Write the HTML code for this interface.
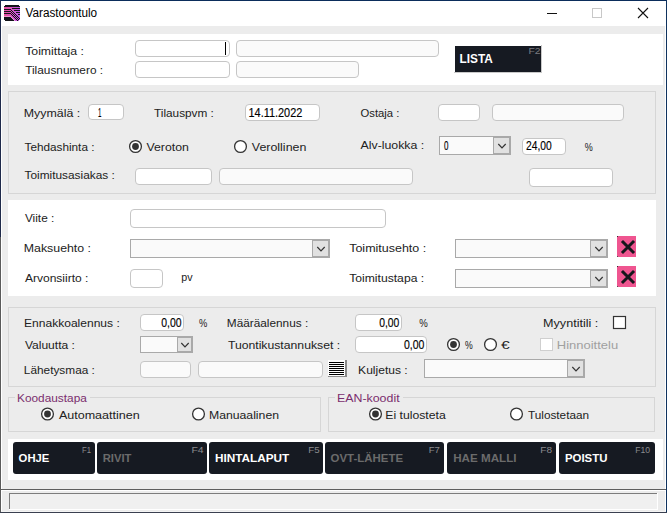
<!DOCTYPE html>
<html><head><meta charset="utf-8"><style>
html,body{margin:0;padding:0;background:#fff;width:667px;height:513px;overflow:hidden}
svg{display:block;font-family:"Liberation Sans",sans-serif}
</style></head><body>
<svg width="667" height="513" viewBox="0 0 667 513" shape-rendering="auto">
<rect x="0" y="0" width="667" height="513" fill="#ffffff"/>
<rect x="2" y="26" width="663" height="486" fill="#ececec"/>
<g shape-rendering="crispEdges"><rect x="5" y="5" width="1" height="1" fill="#141419"/><rect x="6" y="5" width="1" height="1" fill="#141419"/><rect x="7" y="5" width="1" height="1" fill="#141419"/><rect x="8" y="5" width="1" height="1" fill="#141419"/><rect x="9" y="5" width="1" height="1" fill="#141419"/><rect x="10" y="5" width="1" height="1" fill="#141419"/><rect x="11" y="5" width="1" height="1" fill="#141419"/><rect x="12" y="5" width="1" height="1" fill="#141419"/><rect x="13" y="5" width="1" height="1" fill="#141419"/><rect x="14" y="5" width="1" height="1" fill="#141419"/><rect x="15" y="5" width="1" height="1" fill="#141419"/><rect x="16" y="5" width="1" height="1" fill="#141419"/><rect x="17" y="5" width="1" height="1" fill="#141419"/><rect x="18" y="5" width="1" height="1" fill="#141419"/><rect x="4" y="6" width="1" height="1" fill="#141419"/><rect x="5" y="6" width="1" height="1" fill="#141419"/><rect x="6" y="6" width="1" height="1" fill="#141419"/><rect x="7" y="6" width="1" height="1" fill="#141419"/><rect x="8" y="6" width="1" height="1" fill="#141419"/><rect x="9" y="6" width="1" height="1" fill="#141419"/><rect x="10" y="6" width="1" height="1" fill="#141419"/><rect x="11" y="6" width="1" height="1" fill="#141419"/><rect x="12" y="6" width="1" height="1" fill="#141419"/><rect x="13" y="6" width="1" height="1" fill="#141419"/><rect x="14" y="6" width="1" height="1" fill="#141419"/><rect x="15" y="6" width="1" height="1" fill="#141419"/><rect x="16" y="6" width="1" height="1" fill="#141419"/><rect x="17" y="6" width="1" height="1" fill="#141419"/><rect x="18" y="6" width="1" height="1" fill="#141419"/><rect x="19" y="6" width="1" height="1" fill="#141419"/><rect x="4" y="7" width="1" height="1" fill="#e8509e"/><rect x="5" y="7" width="1" height="1" fill="#e550a2"/><rect x="6" y="7" width="1" height="1" fill="#e351a7"/><rect x="7" y="7" width="1" height="1" fill="#e052ac"/><rect x="8" y="7" width="1" height="1" fill="#de52b1"/><rect x="9" y="7" width="1" height="1" fill="#dc53b6"/><rect x="10" y="7" width="1" height="1" fill="#d954bb"/><rect x="11" y="7" width="1" height="1" fill="#d754c0"/><rect x="12" y="7" width="1" height="1" fill="#d455c5"/><rect x="13" y="7" width="1" height="1" fill="#d256ca"/><rect x="14" y="7" width="1" height="1" fill="#d056cf"/><rect x="15" y="7" width="1" height="1" fill="#cd57d4"/><rect x="16" y="7" width="1" height="1" fill="#cb58d9"/><rect x="17" y="7" width="1" height="1" fill="#c858de"/><rect x="18" y="7" width="1" height="1" fill="#c659e3"/><rect x="19" y="7" width="1" height="1" fill="#c45ae8"/><rect x="4" y="8" width="1" height="1" fill="#e8509e"/><rect x="5" y="8" width="1" height="1" fill="#e550a2"/><rect x="6" y="8" width="1" height="1" fill="#e351a7"/><rect x="7" y="8" width="1" height="1" fill="#e052ac"/><rect x="8" y="8" width="1" height="1" fill="#de52b1"/><rect x="9" y="8" width="1" height="1" fill="#dc53b6"/><rect x="10" y="8" width="1" height="1" fill="#d954bb"/><rect x="11" y="8" width="1" height="1" fill="#d754c0"/><rect x="12" y="8" width="1" height="1" fill="#141419"/><rect x="13" y="8" width="1" height="1" fill="#141419"/><rect x="14" y="8" width="1" height="1" fill="#141419"/><rect x="15" y="8" width="1" height="1" fill="#141419"/><rect x="16" y="8" width="1" height="1" fill="#141419"/><rect x="17" y="8" width="1" height="1" fill="#141419"/><rect x="18" y="8" width="1" height="1" fill="#141419"/><rect x="19" y="8" width="1" height="1" fill="#141419"/><rect x="4" y="9" width="1" height="1" fill="#141419"/><rect x="5" y="9" width="1" height="1" fill="#141419"/><rect x="6" y="9" width="1" height="1" fill="#141419"/><rect x="7" y="9" width="1" height="1" fill="#141419"/><rect x="8" y="9" width="1" height="1" fill="#141419"/><rect x="9" y="9" width="1" height="1" fill="#141419"/><rect x="10" y="9" width="1" height="1" fill="#141419"/><rect x="11" y="9" width="1" height="1" fill="#d754c0"/><rect x="12" y="9" width="1" height="1" fill="#d455c5"/><rect x="13" y="9" width="1" height="1" fill="#d256ca"/><rect x="14" y="9" width="1" height="1" fill="#d056cf"/><rect x="15" y="9" width="1" height="1" fill="#cd57d4"/><rect x="16" y="9" width="1" height="1" fill="#cb58d9"/><rect x="17" y="9" width="1" height="1" fill="#c858de"/><rect x="18" y="9" width="1" height="1" fill="#c659e3"/><rect x="19" y="9" width="1" height="1" fill="#c45ae8"/><rect x="4" y="10" width="1" height="1" fill="#e8509e"/><rect x="5" y="10" width="1" height="1" fill="#e550a2"/><rect x="6" y="10" width="1" height="1" fill="#e351a7"/><rect x="7" y="10" width="1" height="1" fill="#e052ac"/><rect x="8" y="10" width="1" height="1" fill="#de52b1"/><rect x="9" y="10" width="1" height="1" fill="#dc53b6"/><rect x="10" y="10" width="1" height="1" fill="#d954bb"/><rect x="11" y="10" width="1" height="1" fill="#141419"/><rect x="12" y="10" width="1" height="1" fill="#d455c5"/><rect x="13" y="10" width="1" height="1" fill="#d256ca"/><rect x="14" y="10" width="1" height="1" fill="#141419"/><rect x="15" y="10" width="1" height="1" fill="#141419"/><rect x="16" y="10" width="1" height="1" fill="#141419"/><rect x="17" y="10" width="1" height="1" fill="#141419"/><rect x="18" y="10" width="1" height="1" fill="#141419"/><rect x="19" y="10" width="1" height="1" fill="#141419"/><rect x="4" y="11" width="1" height="1" fill="#141419"/><rect x="5" y="11" width="1" height="1" fill="#141419"/><rect x="6" y="11" width="1" height="1" fill="#141419"/><rect x="7" y="11" width="1" height="1" fill="#141419"/><rect x="8" y="11" width="1" height="1" fill="#141419"/><rect x="9" y="11" width="1" height="1" fill="#141419"/><rect x="10" y="11" width="1" height="1" fill="#141419"/><rect x="11" y="11" width="1" height="1" fill="#d754c0"/><rect x="12" y="11" width="1" height="1" fill="#141419"/><rect x="13" y="11" width="1" height="1" fill="#d256ca"/><rect x="14" y="11" width="1" height="1" fill="#d056cf"/><rect x="15" y="11" width="1" height="1" fill="#cd57d4"/><rect x="16" y="11" width="1" height="1" fill="#cb58d9"/><rect x="17" y="11" width="1" height="1" fill="#c858de"/><rect x="18" y="11" width="1" height="1" fill="#c659e3"/><rect x="19" y="11" width="1" height="1" fill="#c45ae8"/><rect x="4" y="12" width="1" height="1" fill="#e8509e"/><rect x="5" y="12" width="1" height="1" fill="#e550a2"/><rect x="6" y="12" width="1" height="1" fill="#e351a7"/><rect x="7" y="12" width="1" height="1" fill="#e052ac"/><rect x="8" y="12" width="1" height="1" fill="#de52b1"/><rect x="9" y="12" width="1" height="1" fill="#dc53b6"/><rect x="10" y="12" width="1" height="1" fill="#d954bb"/><rect x="11" y="12" width="1" height="1" fill="#141419"/><rect x="12" y="12" width="1" height="1" fill="#d455c5"/><rect x="13" y="12" width="1" height="1" fill="#141419"/><rect x="14" y="12" width="1" height="1" fill="#d056cf"/><rect x="15" y="12" width="1" height="1" fill="#cd57d4"/><rect x="16" y="12" width="1" height="1" fill="#141419"/><rect x="17" y="12" width="1" height="1" fill="#141419"/><rect x="18" y="12" width="1" height="1" fill="#141419"/><rect x="19" y="12" width="1" height="1" fill="#141419"/><rect x="4" y="13" width="1" height="1" fill="#141419"/><rect x="5" y="13" width="1" height="1" fill="#141419"/><rect x="6" y="13" width="1" height="1" fill="#141419"/><rect x="7" y="13" width="1" height="1" fill="#141419"/><rect x="8" y="13" width="1" height="1" fill="#141419"/><rect x="9" y="13" width="1" height="1" fill="#141419"/><rect x="10" y="13" width="1" height="1" fill="#141419"/><rect x="11" y="13" width="1" height="1" fill="#d754c0"/><rect x="12" y="13" width="1" height="1" fill="#141419"/><rect x="13" y="13" width="1" height="1" fill="#d256ca"/><rect x="14" y="13" width="1" height="1" fill="#141419"/><rect x="15" y="13" width="1" height="1" fill="#cd57d4"/><rect x="16" y="13" width="1" height="1" fill="#cb58d9"/><rect x="17" y="13" width="1" height="1" fill="#c858de"/><rect x="18" y="13" width="1" height="1" fill="#c659e3"/><rect x="19" y="13" width="1" height="1" fill="#c45ae8"/><rect x="4" y="14" width="1" height="1" fill="#e8509e"/><rect x="5" y="14" width="1" height="1" fill="#e550a2"/><rect x="6" y="14" width="1" height="1" fill="#e351a7"/><rect x="7" y="14" width="1" height="1" fill="#e052ac"/><rect x="8" y="14" width="1" height="1" fill="#de52b1"/><rect x="9" y="14" width="1" height="1" fill="#dc53b6"/><rect x="10" y="14" width="1" height="1" fill="#d954bb"/><rect x="11" y="14" width="1" height="1" fill="#141419"/><rect x="12" y="14" width="1" height="1" fill="#d455c5"/><rect x="13" y="14" width="1" height="1" fill="#141419"/><rect x="14" y="14" width="1" height="1" fill="#d056cf"/><rect x="15" y="14" width="1" height="1" fill="#141419"/><rect x="16" y="14" width="1" height="1" fill="#cb58d9"/><rect x="17" y="14" width="1" height="1" fill="#c858de"/><rect x="18" y="14" width="1" height="1" fill="#141419"/><rect x="19" y="14" width="1" height="1" fill="#141419"/><rect x="4" y="15" width="1" height="1" fill="#e8509e"/><rect x="5" y="15" width="1" height="1" fill="#e550a2"/><rect x="6" y="15" width="1" height="1" fill="#e351a7"/><rect x="7" y="15" width="1" height="1" fill="#e052ac"/><rect x="8" y="15" width="1" height="1" fill="#de52b1"/><rect x="9" y="15" width="1" height="1" fill="#dc53b6"/><rect x="10" y="15" width="1" height="1" fill="#d954bb"/><rect x="11" y="15" width="1" height="1" fill="#d754c0"/><rect x="12" y="15" width="1" height="1" fill="#141419"/><rect x="13" y="15" width="1" height="1" fill="#d256ca"/><rect x="14" y="15" width="1" height="1" fill="#141419"/><rect x="15" y="15" width="1" height="1" fill="#cd57d4"/><rect x="16" y="15" width="1" height="1" fill="#141419"/><rect x="17" y="15" width="1" height="1" fill="#c858de"/><rect x="18" y="15" width="1" height="1" fill="#c659e3"/><rect x="19" y="15" width="1" height="1" fill="#c45ae8"/><rect x="4" y="16" width="1" height="1" fill="#e8509e" opacity="0.6"/><rect x="5" y="16" width="1" height="1" fill="#e550a2" opacity="0.6"/><rect x="6" y="16" width="1" height="1" fill="#e351a7" opacity="0.6"/><rect x="7" y="16" width="1" height="1" fill="#e052ac" opacity="0.6"/><rect x="8" y="16" width="1" height="1" fill="#de52b1" opacity="0.6"/><rect x="9" y="16" width="1" height="1" fill="#dc53b6" opacity="0.6"/><rect x="10" y="16" width="1" height="1" fill="#d954bb" opacity="0.6"/><rect x="11" y="16" width="1" height="1" fill="#d754c0"/><rect x="12" y="16" width="1" height="1" fill="#d455c5"/><rect x="13" y="16" width="1" height="1" fill="#141419"/><rect x="14" y="16" width="1" height="1" fill="#d056cf"/><rect x="15" y="16" width="1" height="1" fill="#141419"/><rect x="16" y="16" width="1" height="1" fill="#cb58d9"/><rect x="17" y="16" width="1" height="1" fill="#141419"/><rect x="18" y="16" width="1" height="1" fill="#c659e3"/><rect x="19" y="16" width="1" height="1" fill="#c45ae8"/><rect x="4" y="17" width="1" height="1" fill="#141419"/><rect x="5" y="17" width="1" height="1" fill="#141419"/><rect x="6" y="17" width="1" height="1" fill="#141419"/><rect x="7" y="17" width="1" height="1" fill="#141419"/><rect x="8" y="17" width="1" height="1" fill="#141419"/><rect x="9" y="17" width="1" height="1" fill="#141419"/><rect x="10" y="17" width="1" height="1" fill="#141419"/><rect x="11" y="17" width="1" height="1" fill="#d754c0" opacity="0.6"/><rect x="12" y="17" width="1" height="1" fill="#d455c5"/><rect x="13" y="17" width="1" height="1" fill="#d256ca"/><rect x="14" y="17" width="1" height="1" fill="#141419"/><rect x="15" y="17" width="1" height="1" fill="#cd57d4"/><rect x="16" y="17" width="1" height="1" fill="#141419"/><rect x="17" y="17" width="1" height="1" fill="#c858de"/><rect x="18" y="17" width="1" height="1" fill="#141419"/><rect x="19" y="17" width="1" height="1" fill="#c45ae8"/><rect x="4" y="18" width="1" height="1" fill="#141419"/><rect x="5" y="18" width="1" height="1" fill="#141419"/><rect x="6" y="18" width="1" height="1" fill="#141419"/><rect x="7" y="18" width="1" height="1" fill="#141419"/><rect x="8" y="18" width="1" height="1" fill="#141419"/><rect x="9" y="18" width="1" height="1" fill="#141419"/><rect x="10" y="18" width="1" height="1" fill="#141419"/><rect x="11" y="18" width="1" height="1" fill="#141419"/><rect x="12" y="18" width="1" height="1" fill="#d455c5" opacity="0.6"/><rect x="13" y="18" width="1" height="1" fill="#d256ca"/><rect x="14" y="18" width="1" height="1" fill="#d056cf"/><rect x="15" y="18" width="1" height="1" fill="#141419"/><rect x="16" y="18" width="1" height="1" fill="#cb58d9"/><rect x="17" y="18" width="1" height="1" fill="#141419"/><rect x="18" y="18" width="1" height="1" fill="#c659e3"/><rect x="19" y="18" width="1" height="1" fill="#141419"/><rect x="4" y="19" width="1" height="1" fill="#141419"/><rect x="5" y="19" width="1" height="1" fill="#141419"/><rect x="6" y="19" width="1" height="1" fill="#141419"/><rect x="7" y="19" width="1" height="1" fill="#141419"/><rect x="8" y="19" width="1" height="1" fill="#141419"/><rect x="9" y="19" width="1" height="1" fill="#141419"/><rect x="10" y="19" width="1" height="1" fill="#141419"/><rect x="11" y="19" width="1" height="1" fill="#141419"/><rect x="12" y="19" width="1" height="1" fill="#141419"/><rect x="13" y="19" width="1" height="1" fill="#d256ca" opacity="0.6"/><rect x="14" y="19" width="1" height="1" fill="#d056cf"/><rect x="15" y="19" width="1" height="1" fill="#cd57d4"/><rect x="16" y="19" width="1" height="1" fill="#141419"/><rect x="17" y="19" width="1" height="1" fill="#c858de"/><rect x="18" y="19" width="1" height="1" fill="#141419"/><rect x="19" y="19" width="1" height="1" fill="#c45ae8"/><rect x="5" y="20" width="1" height="1" fill="#141419"/><rect x="6" y="20" width="1" height="1" fill="#141419"/><rect x="7" y="20" width="1" height="1" fill="#141419"/><rect x="8" y="20" width="1" height="1" fill="#141419"/><rect x="9" y="20" width="1" height="1" fill="#141419"/><rect x="10" y="20" width="1" height="1" fill="#141419"/><rect x="11" y="20" width="1" height="1" fill="#141419"/><rect x="12" y="20" width="1" height="1" fill="#141419"/><rect x="13" y="20" width="1" height="1" fill="#141419"/><rect x="14" y="20" width="1" height="1" fill="#d056cf" opacity="0.6"/><rect x="15" y="20" width="1" height="1" fill="#cd57d4"/><rect x="16" y="20" width="1" height="1" fill="#cb58d9"/><rect x="17" y="20" width="1" height="1" fill="#141419"/><rect x="18" y="20" width="1" height="1" fill="#c659e3"/></g>
<path d="M547 13.5 H557" stroke="#111" stroke-width="1"/>
<rect x="592.5" y="8.5" width="9" height="9" fill="none" stroke="#c8c8c8" stroke-width="1"/>
<path d="M638 8 L648 18 M648 8 L638 18" stroke="#111" stroke-width="1.1"/>
<rect x="8" y="34" width="655" height="51" fill="#ffffff"/>
<rect x="135.5" y="40.5" width="94" height="16" rx="3.5" fill="#fff" stroke="#c6c6c6" stroke-width="1"/>
<rect x="236.5" y="40.5" width="202" height="16" rx="3.5" fill="#fafafa" stroke="#c6c6c6" stroke-width="1"/>
<rect x="135.5" y="61.5" width="94" height="16" rx="3.5" fill="#fff" stroke="#c6c6c6" stroke-width="1"/>
<rect x="236.5" y="61.5" width="122" height="16" rx="3.5" fill="#fafafa" stroke="#c6c6c6" stroke-width="1"/>
<rect x="225" y="42" width="1" height="13" fill="#000"/>
<rect x="541" y="45" width="1" height="28" fill="#c9c9c9"/>
<rect x="454" y="72" width="88" height="1" fill="#c9c9c9"/>
<rect x="455" y="46" width="86" height="26" fill="#161a22"/>
<rect x="8.5" y="91.5" width="647" height="102" rx="0" fill="#ececec" stroke="#d6d6d6" stroke-width="1"/>
<rect x="88.5" y="104.5" width="35" height="15" rx="3.5" fill="#fff" stroke="#c6c6c6" stroke-width="1"/>
<rect x="245.5" y="104.5" width="74" height="16" rx="3.5" fill="#fff" stroke="#c6c6c6" stroke-width="1"/>
<rect x="438.5" y="104.5" width="41" height="16" rx="3.5" fill="#fff" stroke="#c6c6c6" stroke-width="1"/>
<rect x="492.5" y="104.5" width="131" height="16" rx="3.5" fill="#fafafa" stroke="#c6c6c6" stroke-width="1"/>
<circle cx="135.5" cy="146.5" r="5.9" fill="#fff" stroke="#333" stroke-width="1.3"/>
<circle cx="135.5" cy="146.5" r="3.4" fill="#333"/>
<circle cx="240.5" cy="146.5" r="5.9" fill="#fff" stroke="#333" stroke-width="1.3"/>
<rect x="439" y="136" width="72" height="19" fill="#a9a9a9"/>
<rect x="440" y="137" width="70" height="17" fill="#fafafa"/>
<rect x="493" y="136" width="18" height="19" fill="#a9a9a9"/>
<rect x="494" y="138" width="15" height="15" fill="#e1e1e1"/>
<path d="M498.3 144.0 L502.0 147.8 L505.7 144.0" fill="none" stroke="#333" stroke-width="1.2"/>
<rect x="522.5" y="138.5" width="43" height="16" rx="3.5" fill="#fff" stroke="#c6c6c6" stroke-width="1"/>
<rect x="135.5" y="168.5" width="76" height="16" rx="3.5" fill="#fff" stroke="#c6c6c6" stroke-width="1"/>
<rect x="219.5" y="168.5" width="193" height="16" rx="3.5" fill="#fafafa" stroke="#c6c6c6" stroke-width="1"/>
<rect x="529.5" y="168.5" width="83" height="18" rx="3.5" fill="#fff" stroke="#c6c6c6" stroke-width="1"/>
<rect x="8" y="200" width="648" height="96" fill="#ffffff"/>
<rect x="130.5" y="209.5" width="255" height="18" rx="3.5" fill="#fff" stroke="#c6c6c6" stroke-width="1"/>
<rect x="130" y="239" width="200" height="19" fill="#a9a9a9"/>
<rect x="131" y="240" width="198" height="17" fill="#fafafa"/>
<rect x="312" y="239" width="18" height="19" fill="#a9a9a9"/>
<rect x="313" y="241" width="15" height="15" fill="#e1e1e1"/>
<path d="M317.3 247.0 L321.0 250.8 L324.7 247.0" fill="none" stroke="#333" stroke-width="1.2"/>
<rect x="130.5" y="269.5" width="32" height="18" rx="3.5" fill="#fff" stroke="#c6c6c6" stroke-width="1"/>
<rect x="455" y="239" width="153" height="19" fill="#a9a9a9"/>
<rect x="456" y="240" width="151" height="17" fill="#fafafa"/>
<rect x="590" y="239" width="18" height="19" fill="#a9a9a9"/>
<rect x="591" y="241" width="15" height="15" fill="#e1e1e1"/>
<path d="M595.3 247.0 L599.0 250.8 L602.7 247.0" fill="none" stroke="#333" stroke-width="1.2"/>
<rect x="455" y="269" width="153" height="19" fill="#a9a9a9"/>
<rect x="456" y="270" width="151" height="17" fill="#fafafa"/>
<rect x="590" y="269" width="18" height="19" fill="#a9a9a9"/>
<rect x="591" y="271" width="15" height="15" fill="#e1e1e1"/>
<path d="M595.3 277.0 L599.0 280.8 L602.7 277.0" fill="none" stroke="#333" stroke-width="1.2"/>
<rect x="617" y="236" width="19" height="21" fill="#ef5590"/>
<path d="M623 242 L633 252 M633 242 L623 252" stroke="#16161c" stroke-width="3" stroke-linecap="square"/>
<rect x="617" y="236" width="1" height="1" fill="#333"/>
<rect x="617" y="256" width="1" height="1" fill="#555"/>
<rect x="617" y="266" width="19" height="21" fill="#ef5590"/>
<path d="M623 272 L633 282 M633 272 L623 282" stroke="#16161c" stroke-width="3" stroke-linecap="square"/>
<rect x="617" y="266" width="1" height="1" fill="#333"/>
<rect x="617" y="286" width="1" height="1" fill="#555"/>
<rect x="8.5" y="307.5" width="647" height="79" rx="0" fill="#ececec" stroke="#d6d6d6" stroke-width="1"/>
<rect x="140.5" y="314.5" width="43" height="16" rx="3.5" fill="#fff" stroke="#c6c6c6" stroke-width="1"/>
<rect x="140" y="336" width="53" height="17" fill="#a9a9a9"/>
<rect x="141" y="337" width="51" height="15" fill="#fafafa"/>
<rect x="177" y="336" width="16" height="17" fill="#a9a9a9"/>
<rect x="178" y="338" width="13" height="13" fill="#e1e1e1"/>
<path d="M181.3 343.0 L185.0 346.8 L188.7 343.0" fill="none" stroke="#333" stroke-width="1.2"/>
<rect x="140.5" y="361.5" width="50" height="16" rx="3.5" fill="#fafafa" stroke="#c6c6c6" stroke-width="1"/>
<rect x="198.5" y="361.5" width="124" height="16" rx="3.5" fill="#fafafa" stroke="#c6c6c6" stroke-width="1"/>
<rect x="345" y="360" width="2" height="17" fill="#8a8a8a"/>
<rect x="328" y="376" width="19" height="1" fill="#8a8a8a"/>
<rect x="328" y="360" width="17" height="16" fill="#ffffff"/>
<rect x="329" y="362" width="15" height="1" fill="#000"/>
<rect x="329" y="364" width="15" height="1" fill="#000"/>
<rect x="329" y="366" width="15" height="1" fill="#000"/>
<rect x="329" y="368" width="15" height="1" fill="#000"/>
<rect x="329" y="370" width="15" height="1" fill="#000"/>
<rect x="329" y="372" width="15" height="1" fill="#000"/>
<rect x="329" y="374" width="15" height="1" fill="#000"/>
<rect x="424" y="359" width="161" height="19" fill="#a9a9a9"/>
<rect x="425" y="360" width="159" height="17" fill="#fafafa"/>
<rect x="567" y="359" width="18" height="19" fill="#a9a9a9"/>
<rect x="568" y="361" width="15" height="15" fill="#e1e1e1"/>
<path d="M572.3 367.0 L576.0 370.8 L579.7 367.0" fill="none" stroke="#333" stroke-width="1.2"/>
<rect x="355.5" y="314.5" width="46" height="16" rx="3.5" fill="#fff" stroke="#c6c6c6" stroke-width="1"/>
<rect x="355.5" y="336.5" width="71" height="16" rx="3.5" fill="#fff" stroke="#c6c6c6" stroke-width="1"/>
<circle cx="453.5" cy="344.5" r="5.9" fill="#fff" stroke="#333" stroke-width="1.3"/>
<circle cx="453.5" cy="344.5" r="3.4" fill="#333"/>
<circle cx="490.5" cy="344.5" r="5.9" fill="#fff" stroke="#333" stroke-width="1.3"/>
<rect x="613.5" y="316.5" width="12" height="12" fill="#fff" stroke="#333" stroke-width="1.2"/>
<rect x="540.5" y="338.5" width="12" height="12" rx="0" fill="#fff" stroke="#cfcfcf" stroke-width="1"/>
<rect x="8" y="397" width="1" height="35" fill="#d6d6d6"/>
<rect x="8" y="431" width="313" height="1" fill="#d6d6d6"/>
<rect x="320" y="397" width="1" height="35" fill="#d6d6d6"/>
<rect x="8" y="397" width="7" height="1" fill="#d6d6d6"/>
<rect x="90" y="397" width="231" height="1" fill="#d6d6d6"/>
<rect x="328" y="397" width="1" height="35" fill="#d6d6d6"/>
<rect x="328" y="431" width="327" height="1" fill="#d6d6d6"/>
<rect x="654" y="397" width="1" height="35" fill="#d6d6d6"/>
<rect x="328" y="397" width="7" height="1" fill="#d6d6d6"/>
<rect x="403" y="397" width="252" height="1" fill="#d6d6d6"/>
<circle cx="47.5" cy="414" r="5.9" fill="#fff" stroke="#333" stroke-width="1.3"/>
<circle cx="47.5" cy="414" r="3.4" fill="#333"/>
<circle cx="198.5" cy="414" r="5.9" fill="#fff" stroke="#333" stroke-width="1.3"/>
<circle cx="375.5" cy="414" r="5.9" fill="#fff" stroke="#333" stroke-width="1.3"/>
<circle cx="375.5" cy="414" r="3.4" fill="#333"/>
<circle cx="516.5" cy="414" r="5.9" fill="#fff" stroke="#333" stroke-width="1.3"/>
<rect x="8" y="439" width="655" height="41" fill="#ffffff"/>
<rect x="13" y="442" width="82" height="32" rx="3" fill="#161a22"/>
<rect x="97" y="442" width="110" height="32" rx="3" fill="#161a22"/>
<rect x="209" y="442" width="114" height="32" rx="3" fill="#161a22"/>
<rect x="325" y="442" width="119" height="32" rx="3" fill="#161a22"/>
<rect x="447" y="442" width="109" height="32" rx="3" fill="#161a22"/>
<rect x="559" y="442" width="96" height="32" rx="3" fill="#161a22"/>
<rect x="0" y="489" width="667" height="1" fill="#5e5e5e"/>
<rect x="0" y="490" width="667" height="1" fill="#ffffff"/>
<rect x="2" y="491" width="663" height="20" fill="#ececec"/>
<rect x="9" y="493" width="649" height="17" fill="#ffffff"/>
<rect x="9" y="493" width="648" height="16" fill="#7c7c7c"/>
<rect x="10" y="494" width="647" height="15" fill="#f0f0f0"/>
<rect x="0" y="511" width="667" height="1" fill="#f4f4f4"/>
<rect x="0" y="0" width="667" height="1" fill="#0b2d5b"/>
<rect x="666" y="0" width="1" height="513" fill="#0f335f"/>
<rect x="0" y="0" width="1" height="237" fill="#1f2a4a"/>
<rect x="0" y="237" width="1" height="276" fill="#5a5a5a"/>
<rect x="0" y="512" width="667" height="1" fill="#3a4050"/>
<text x="25.50" y="17" font-size="12" textLength="71.67" lengthAdjust="spacingAndGlyphs" fill="#000">Varastoontulo</text>
<text x="25.20" y="55" font-size="11" textLength="58.64" lengthAdjust="spacingAndGlyphs" fill="#222">Toimittaja :</text>
<text x="25.20" y="74" font-size="11" textLength="77.87" lengthAdjust="spacingAndGlyphs" fill="#222">Tilausnumero :</text>
<text x="459.50" y="63" font-size="12" font-weight="bold" textLength="33.28" lengthAdjust="spacingAndGlyphs" fill="#fff">LISTA</text>
<text x="528.50" y="54" font-size="9" textLength="12.09" lengthAdjust="spacingAndGlyphs" fill="#7a7a80">F2</text>
<text x="23.77" y="117" font-size="11" textLength="56.50" lengthAdjust="spacingAndGlyphs" fill="#222">Myymälä :</text>
<text transform="translate(97.88,117) scale(0.517,1)" font-size="12" stroke="#000" stroke-width="0.15" fill="#000">1</text>
<text x="154.00" y="117" font-size="11" textLength="59.89" lengthAdjust="spacingAndGlyphs" fill="#222">Tilauspvm :</text>
<text x="248.49" y="117" font-size="12" textLength="53.87" lengthAdjust="spacingAndGlyphs" stroke="#000" stroke-width="0.15" fill="#000">14.11.2022</text>
<text x="360.50" y="117" font-size="11" textLength="38.83" lengthAdjust="spacingAndGlyphs" fill="#222">Ostaja :</text>
<text x="24.50" y="151" font-size="11" textLength="69.97" lengthAdjust="spacingAndGlyphs" fill="#222">Tehdashinta :</text>
<text x="146.50" y="151" font-size="11" textLength="42.41" lengthAdjust="spacingAndGlyphs" fill="#222">Veroton</text>
<text x="251.80" y="151" font-size="11" textLength="54.57" lengthAdjust="spacingAndGlyphs" fill="#222">Verollinen</text>
<text x="360.50" y="149" font-size="11" textLength="63.76" lengthAdjust="spacingAndGlyphs" fill="#222">Alv-luokka :</text>
<text transform="translate(444.00,150) scale(0.671,1)" font-size="12" stroke="#000" stroke-width="0.15" fill="#000">0</text>
<text x="526.00" y="150" font-size="12" textLength="25.73" lengthAdjust="spacingAndGlyphs" stroke="#000" stroke-width="0.15" fill="#000">24,00</text>
<text transform="translate(584.80,151) scale(0.820,1)" font-size="11" fill="#222">%</text>
<text x="24.50" y="179" font-size="11" textLength="90.33" lengthAdjust="spacingAndGlyphs" fill="#222">Toimitusasiakas :</text>
<text x="24.90" y="222" font-size="11" textLength="29.44" lengthAdjust="spacingAndGlyphs" fill="#222">Viite :</text>
<text x="23.78" y="252" font-size="11" textLength="67.26" lengthAdjust="spacingAndGlyphs" fill="#222">Maksuehto :</text>
<text x="24.90" y="282" font-size="11" textLength="63.58" lengthAdjust="spacingAndGlyphs" fill="#222">Arvonsiirto :</text>
<text x="181.30" y="281" font-size="11" textLength="11.33" lengthAdjust="spacingAndGlyphs" fill="#222">pv</text>
<text x="349.20" y="252" font-size="11" textLength="76.99" lengthAdjust="spacingAndGlyphs" fill="#222">Toimitusehto :</text>
<text x="349.20" y="282" font-size="11" textLength="74.97" lengthAdjust="spacingAndGlyphs" fill="#222">Toimitustapa :</text>
<text x="24.00" y="327" font-size="11" textLength="95.79" lengthAdjust="spacingAndGlyphs" fill="#222">Ennakkoalennus :</text>
<text x="161.20" y="327" font-size="12" textLength="20.31" lengthAdjust="spacingAndGlyphs" stroke="#000" stroke-width="0.15" fill="#000">0,00</text>
<text transform="translate(199.00,327) scale(0.850,1)" font-size="11" fill="#222">%</text>
<text x="226.83" y="327" font-size="11" textLength="81.36" lengthAdjust="spacingAndGlyphs" fill="#222">Määräalennus :</text>
<text x="379.20" y="327" font-size="12" textLength="20.11" lengthAdjust="spacingAndGlyphs" stroke="#000" stroke-width="0.15" fill="#000">0,00</text>
<text transform="translate(419.30,327) scale(0.870,1)" font-size="11" fill="#222">%</text>
<text x="543.06" y="327" font-size="11" textLength="55.27" lengthAdjust="spacingAndGlyphs" fill="#222">Myyntitili :</text>
<text x="24.90" y="349" font-size="11" textLength="50.04" lengthAdjust="spacingAndGlyphs" fill="#222">Valuutta :</text>
<text x="227.90" y="349" font-size="11" textLength="112.23" lengthAdjust="spacingAndGlyphs" fill="#222">Tuontikustannukset :</text>
<text x="404.00" y="349" font-size="12" textLength="20.41" lengthAdjust="spacingAndGlyphs" stroke="#000" stroke-width="0.15" fill="#000">0,00</text>
<text transform="translate(465.10,349) scale(0.790,1)" font-size="11" fill="#222">%</text>
<text transform="translate(501.00,349) scale(1.417,1)" font-size="11" fill="#222">€</text>
<text x="556.82" y="349" font-size="11" textLength="61.36" lengthAdjust="spacingAndGlyphs" fill="#a0a0a0">Hinnoittelu</text>
<text x="23.82" y="374" font-size="11" textLength="71.10" lengthAdjust="spacingAndGlyphs" fill="#222">Lähetysmaa :</text>
<text x="358.10" y="374" font-size="11" textLength="49.57" lengthAdjust="spacingAndGlyphs" fill="#222">Kuljetus :</text>
<text x="17.02" y="402" font-size="11" textLength="69.81" lengthAdjust="spacingAndGlyphs" fill="#7b2e6e">Koodaustapa</text>
<text x="58.90" y="419" font-size="11" textLength="80.83" lengthAdjust="spacingAndGlyphs" fill="#222">Automaattinen</text>
<text x="208.99" y="419" font-size="11" textLength="70.01" lengthAdjust="spacingAndGlyphs" fill="#222">Manuaalinen</text>
<text x="336.97" y="402" font-size="11" textLength="62.62" lengthAdjust="spacingAndGlyphs" fill="#7b2e6e">EAN-koodit</text>
<text x="385.29" y="419" font-size="11" textLength="60.47" lengthAdjust="spacingAndGlyphs" fill="#222">Ei tulosteta</text>
<text x="528.00" y="419" font-size="11" textLength="61.08" lengthAdjust="spacingAndGlyphs" fill="#222">Tulostetaan</text>
<text x="18.60" y="462" font-size="11" font-weight="bold" textLength="30.77" lengthAdjust="spacingAndGlyphs" fill="#fff">OHJE</text>
<text x="82.00" y="453" font-size="9" textLength="9.04" lengthAdjust="spacingAndGlyphs" fill="#8a8a8e">F1</text>
<text x="102.70" y="462" font-size="11" font-weight="bold" textLength="28.80" lengthAdjust="spacingAndGlyphs" fill="#6b6b6b">RIVIT</text>
<text x="191.40" y="453" font-size="9" textLength="12.20" lengthAdjust="spacingAndGlyphs" fill="#8a8a8e">F4</text>
<text x="214.90" y="462" font-size="11" font-weight="bold" textLength="74.33" lengthAdjust="spacingAndGlyphs" fill="#fff">HINTALAPUT</text>
<text x="308.20" y="453" font-size="9" textLength="11.36" lengthAdjust="spacingAndGlyphs" fill="#8a8a8e">F5</text>
<text x="330.60" y="462" font-size="11" font-weight="bold" textLength="72.46" lengthAdjust="spacingAndGlyphs" fill="#6b6b6b">OVT-LÄHETE</text>
<text x="428.70" y="453" font-size="9" textLength="11.15" lengthAdjust="spacingAndGlyphs" fill="#8a8a8e">F7</text>
<text x="453.20" y="462" font-size="11" font-weight="bold" textLength="63.34" lengthAdjust="spacingAndGlyphs" fill="#6b6b6b">HAE MALLI</text>
<text x="540.30" y="453" font-size="9" textLength="11.78" lengthAdjust="spacingAndGlyphs" fill="#8a8a8e">F8</text>
<text x="564.90" y="462" font-size="11" font-weight="bold" textLength="42.55" lengthAdjust="spacingAndGlyphs" fill="#fff">POISTU</text>
<text x="635.20" y="453" font-size="9" textLength="14.84" lengthAdjust="spacingAndGlyphs" fill="#8a8a8e">F10</text>
</svg>
</body></html>
